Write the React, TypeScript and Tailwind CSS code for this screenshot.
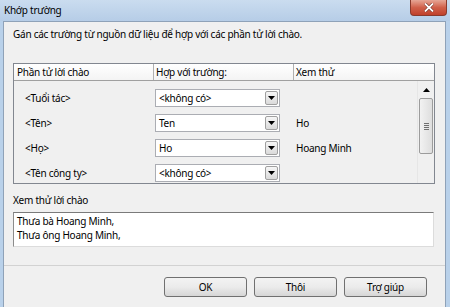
import React from "react";

const rows = [
  { label: "<Tuổi tác>", value: "<không có>", preview: "" },
  { label: "<Tên>", value: "Ten", preview: "Ho" },
  { label: "<Họ>", value: "Ho", preview: "Hoang Minh" },
  { label: "<Tên công ty>", value: "<không có>", preview: "" },
];

function Combo({ value }: { value: string }) {
  return (
    <div className="flex h-[18px] w-[125px] items-center border border-[#abadb3] bg-white">
      <span className="flex-1 pl-[3px] leading-[16px]">{value}</span>
      <div className="mr-px flex h-[14px] w-[13px] items-center justify-center rounded-[2px] border border-[#a0a0a0] bg-gradient-to-b from-[#f6f6f6] to-[#dadada]">
        <svg width="7" height="4" viewBox="0 0 7 4">
          <path d="M0 0h7L3.5 4z" fill="#000" />
        </svg>
      </div>
    </div>
  );
}

function Button({ children }: { children: React.ReactNode }) {
  return (
    <button className="h-[20px] w-[83px] rounded-[3px] border border-[#707070] bg-gradient-to-b from-[#f3f3f3] via-[#ebebeb] to-[#d6d6d6] leading-[18px]">
      {children}
    </button>
  );
}

export default function App() {
  return (
    <div className="flex h-[307px] w-[450px] flex-col overflow-hidden bg-[#b9d1ea] font-['Noto_Sans',sans-serif] text-[10px] tracking-[-0.25px] text-black">
      {/* title bar */}
      <div className="relative flex h-[21px] shrink-0 items-center bg-gradient-to-b from-[#cadcef] to-[#b6cde7] pl-[4px]">
        <span className="-mt-[2px] leading-[14px]">Khớp trường</span>
        <div className="absolute right-[3px] top-0 flex h-[16px] w-[37px] items-center justify-center rounded-b-[4px] border border-t-0 border-[#8a3a2c] bg-gradient-to-b from-[#e6a696] via-[#d0604a] to-[#c0402a]">
          <svg width="10" height="9" viewBox="0 0 10 9">
            <path d="M1 0.5l8 8M9 0.5l-8 8" stroke="#6a2a20" strokeWidth="3" />
            <path d="M1 0.5l8 8M9 0.5l-8 8" stroke="#fff" strokeWidth="1.8" />
          </svg>
        </div>
      </div>

      {/* content */}
      <div className="ml-[3px] mr-[4px] flex flex-1 flex-col border border-b-0 border-[#8fa2b8] bg-[#f0f0f0]">
        <p className="ml-[9px] mt-[5px] h-[14px] leading-[14px]">
          Gán các trường từ nguồn dữ liệu để hợp với các phần tử lời chào.
        </p>

        {/* grid */}
        <div className="ml-[9px] mt-[22px] flex h-[121px] w-[422px] flex-col border border-[#828790]">
          <div className="flex h-[17px] shrink-0 border-b border-[#a0a0a0] bg-gradient-to-b from-white to-[#f4f4f4] leading-[16px]">
            <div className="w-[140px] border-r border-[#b0b0b0] pl-[3px]">Phần tử lời chào</div>
            <div className="w-[140px] border-r border-[#b0b0b0] pl-[2px]">Hợp với trường:</div>
            <div className="flex-1 pl-[2px]">Xem thử</div>
          </div>
          <div className="flex min-h-0 flex-1 overflow-hidden">
            <div className="flex-1 pt-[8px]">
              {rows.map((r) => (
                <div key={r.label} className="mb-[7px] flex h-[18px] items-center">
                  <span className="w-[141px] pl-[11px]">{r.label}</span>
                  <Combo value={r.value} />
                  <span className="pl-[16px]">{r.preview}</span>
                </div>
              ))}
            </div>
            {/* scrollbar */}
            <div className="flex w-[17px] flex-col border-l border-[#e6e6e6] bg-[#f0f0f0]">
              <div className="flex h-[17px] items-center justify-center">
                <svg width="7" height="4" viewBox="0 0 7 4">
                  <path d="M0 4h7L3.5 0z" fill="#000" />
                </svg>
              </div>
              <div className="mx-px flex h-[56px] flex-col items-center justify-center gap-[1px] rounded-[2px] border border-[#9c9c9c] bg-gradient-to-r from-[#f2f2f2] to-[#dedede]">
                <div className="h-px w-[5px] bg-[#707070]" />
                <div className="h-px w-[5px] bg-[#707070]" />
                <div className="h-px w-[5px] bg-[#707070]" />
                <div className="h-px w-[5px] bg-[#707070]" />
              </div>
            </div>
          </div>
        </div>

        <p className="ml-[9px] mt-[9px] h-[14px] leading-[14px]">Xem thử lời chào</p>
        <div className="ml-[9px] mt-[5px] h-[35px] w-[421px] border border-b-[#dcdcdc] border-l-[#8c8c8c] border-r-[#dcdcdc] border-t-[#7a7a7a] bg-white pl-[3px] pt-[1px] leading-[14px]">
          <div>Thưa bà Hoang Minh,</div>
          <div>Thưa ông Hoang Minh,</div>
        </div>

        <div className="mt-[18px] h-px bg-[#d2d2d2]" />
        <div className="mt-[11px] flex justify-end gap-[7px] pr-[18px]">
          <Button>OK</Button>
          <Button>Thôi</Button>
          <Button>Trợ giúp</Button>
        </div>
      </div>
    </div>
  );
}
